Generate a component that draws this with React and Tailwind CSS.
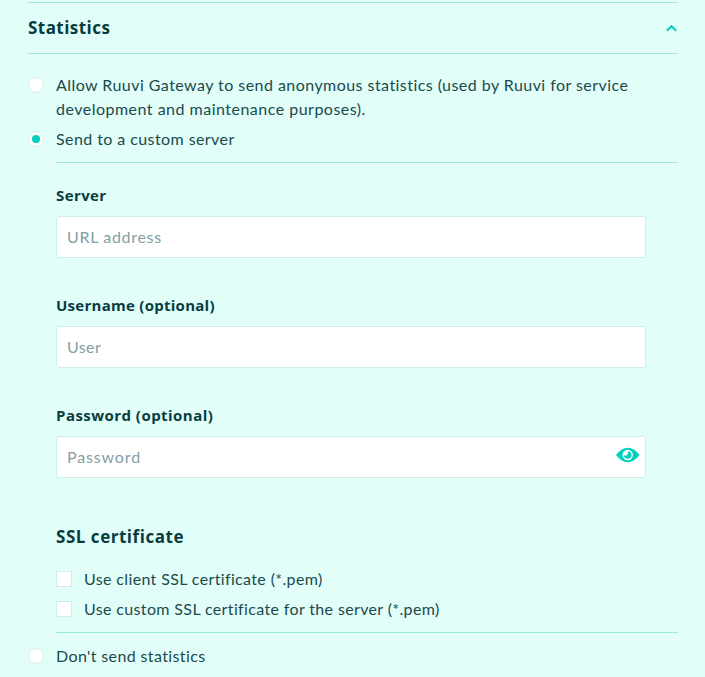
import React from "react";

function Radio({ checked }) {
  return (
    <span className="mt-[3px] flex h-4 w-4 shrink-0 items-center justify-center rounded-full border border-[#d3f0eb] bg-white">
      {checked && <span className="h-2 w-2 rounded-full bg-[#00d0bc]" />}
    </span>
  );
}

function Field({ label, labelClass, placeholder, inputClass, children }) {
  return (
    <div className="mb-9 w-[590px]">
      <label className={`-mt-px block whitespace-nowrap font-['Open_Sans',sans-serif] text-[15px] leading-6 font-bold text-[#083c3f] ${labelClass}`}>{label}</label>
      <div className="mt-[9px] flex h-[42px] items-center rounded-[3px] border border-[#cdeee9] bg-white pl-[10px] pr-[5px]">
        <input
          type="text"
          placeholder={placeholder}
          className={`min-w-0 flex-1 bg-transparent outline-none placeholder:text-[#83a0a2] ${inputClass}`}
        />
        {children}
      </div>
    </div>
  );
}

function CheckRow({ text, textClass }) {
  return (
    <label className="flex gap-3">
      <span className="mt-[3px] h-4 w-4 shrink-0 border border-[#cdeee9] bg-white" />
      <span className={`-mt-px mb-px whitespace-nowrap ${textClass}`}>{text}</span>
    </label>
  );
}

export default function App() {
  return (
    <div className="h-[677px] overflow-hidden bg-[#e1fef9] pl-7 pr-[27px] pt-[2px] font-[Lato,sans-serif] text-base leading-6 text-[#1a4a4c]">
      <header className="flex h-[52px] items-center justify-between border-y border-[#a0e9e0]">
        <h2 className="font-['Open_Sans',sans-serif] text-[17px] leading-6 font-bold tracking-[0.45px] text-[#083c3f]">Statistics</h2>
        <svg width="12" height="8" viewBox="0 0 12 8" fill="none" stroke="#00d0bc" strokeWidth="2">
          <path d="M0.8 6.8 5.5 2.2l4.7 4.6" />
        </svg>
      </header>
      <div className="mt-5 flex gap-3">
        <Radio />
        <div className="-mt-px mb-px whitespace-nowrap">
          <div className="tracking-[0.45px]">Allow Ruuvi Gateway to send anonymous statistics (used by Ruuvi for service</div>
          <div className="tracking-[0.49px]">development and maintenance purposes).</div>
        </div>
      </div>
      <div className="mt-[6px] flex gap-3">
        <Radio checked />
        <span className="-mt-px mb-px tracking-[0.42px]">Send to a custom server</span>
      </div>
      <section className="ml-7 mt-[10px] h-[471px] border-y border-[#a0e9e0] pt-[21px]">
        <Field label="Server" labelClass="tracking-[0.4px]" placeholder="URL address" inputClass="tracking-[0.68px]" />
        <Field label="Username (optional)" labelClass="tracking-[0.27px]" placeholder="User" inputClass="tracking-[0.4px]" />
        <Field label="Password (optional)" labelClass="tracking-[0.46px]" placeholder="Password" inputClass="tracking-[0.85px]">
          <svg className="mb-1" width="24" height="16" viewBox="0 0 24 16">
            <path fill="#00d0bc" d="M0 8C4 3.2 7.6 0.8 11.7 0.8S19.6 3.2 23.6 8C19.6 12.8 15.8 15.2 11.7 15.2S4 12.8 0 8Z" />
            <circle cx="11.7" cy="8" r="4.5" fill="#00d0bc" stroke="white" strokeWidth="1.4" />
            <path fill="white" d="M11.9 3.8v3.6c-.7 0-1.2.4-1.4 1.1H7.4C7.2 5.8 9.2 3.8 11.9 3.8Z" />
          </svg>
        </Field>
        <h3 className="mt-[47px] font-['Open_Sans',sans-serif] text-[17px] leading-6 font-bold tracking-[0.53px] [font-variant-ligatures:common-ligatures] text-[#083c3f]">SSL certificate</h3>
        <div className="mt-[19px] flex flex-col gap-[6px]">
          <CheckRow text="Use client SSL certificate (*.pem)" textClass="tracking-[0.36px]" />
          <CheckRow text="Use custom SSL certificate for the server (*.pem)" textClass="tracking-[0.36px]" />
        </div>
      </section>
      <div className="mt-3 flex gap-3">
        <Radio />
        <span className="-mt-px mb-px tracking-[0.38px]">Don't send statistics</span>
      </div>
    </div>
  );
}
